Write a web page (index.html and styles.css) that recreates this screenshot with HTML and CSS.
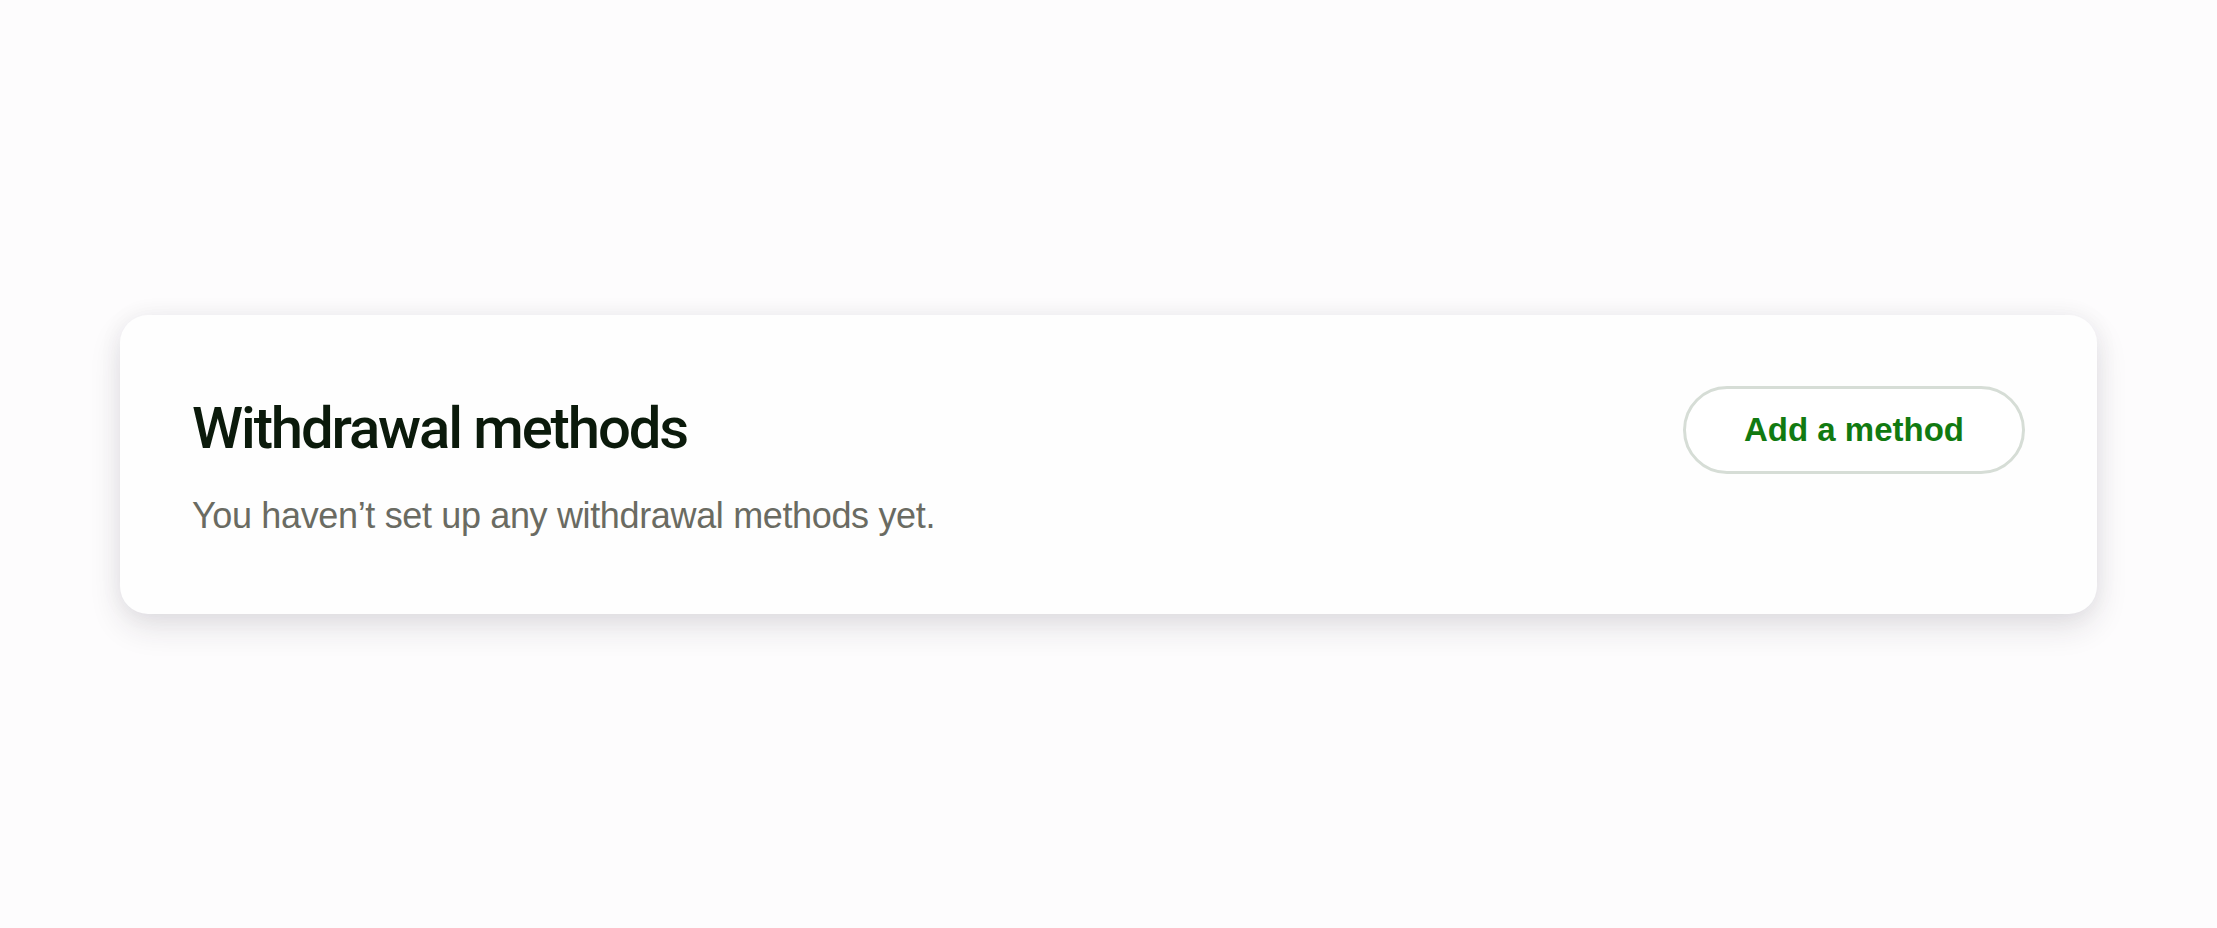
FILE: index.html
```html
<!DOCTYPE html>
<html lang="en">

<head>
    <meta charset="UTF-8">
    <meta name="viewport" content="width=device-width, initial-scale=1.0">
    <title>Withdrawal methods</title>
    <link rel="stylesheet" href="styles.css">
</head>

<body>
    <section class="card">
        <div class="card-info">
            <h1>Withdrawal methods</h1>
            <p>You haven’t set up any withdrawal methods yet.</p>
        </div>
        <button type="button" class="add-btn">Add a method</button>
    </section>
</body>

</html>
```

FILE: styles.css
```css
* {
    padding: 0;
    margin: 0;
    box-sizing: border-box;
    font-family: 'Liberation Sans', Arial, sans-serif;
}

body {
    display: flex;
    justify-content: center;
    align-items: center;
    height: 100vh;
    padding: 0 120px;
    background-color: #fdfcfd;
}

.card {
    width: 100%;
    display: flex;
    justify-content: space-between;
    align-items: flex-start;
    padding: 71px 72px 76px;
    background-color: #fefefe;
    border-radius: 28px;
    box-shadow: 0 14px 32px rgba(40, 30, 50, 0.12), 0 0 24px rgba(40, 30, 50, 0.05);
}

.card-info {
    margin-top: 10px;
}

h1 {
    font-family: 'Roboto', 'Liberation Sans', sans-serif;
    font-weight: 500;
    font-size: 58px;
    line-height: 64px;
    letter-spacing: -2.1px;
    color: #0b1a0b;
}

.card-info p {
    margin-top: 34px;
    font-size: 36px;
    line-height: 44px;
    letter-spacing: -0.35px;
    color: #6a6b62;
}

.add-btn {
    height: 88px;
    padding: 0 58px;
    border: 3px solid #d6ddd6;
    border-radius: 44px;
    background-color: #ffffff;
    color: #117a11;
    font-weight: bold;
    font-size: 33px;
    cursor: pointer;
}
```
